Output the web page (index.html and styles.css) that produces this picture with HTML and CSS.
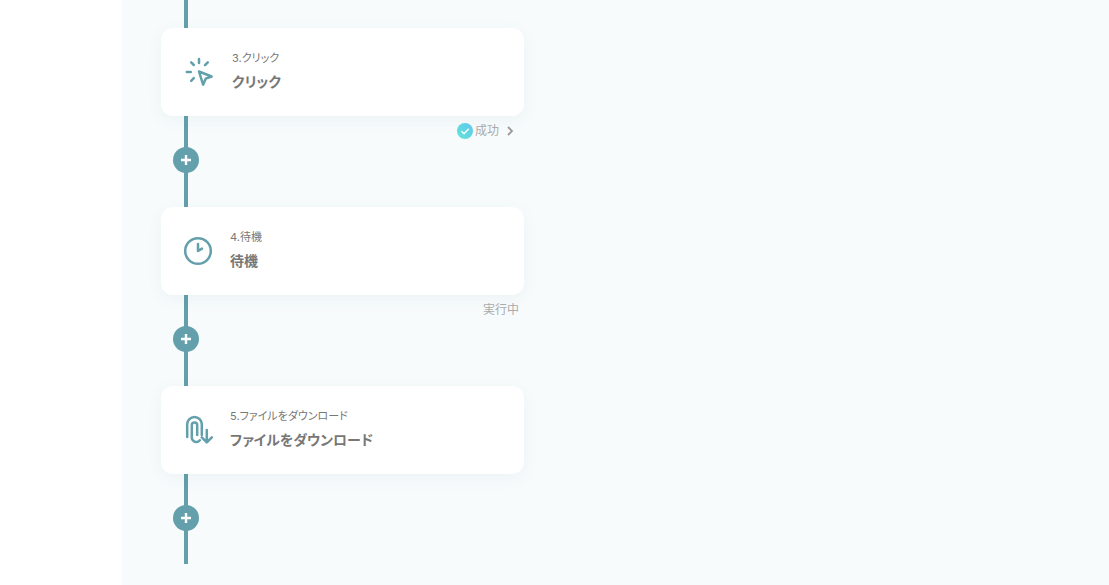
FILE: index.html
```
<!DOCTYPE html>
<html lang="ja">
<head>
<meta charset="utf-8">
<title>ワークフロー</title>
<link rel="stylesheet" href="styles.css">
</head>
<body>
<main class="canvas">
  <ol class="flow">
    <li class="step">
      <article class="card">
        <svg class="icon icon-click" viewBox="0 0 30 30" aria-hidden="true"><path d="M14 2v4M6.2 5.4l2.6 2.6M22.8 5.4L20 8.2M1.8 15h4M6.2 23.8l2.6-2.6M14 14.5l12.6 5-5.9 2.2-2.6 6z"/></svg>
        <div class="text"><p class="label">3.クリック</p><h2 class="title">クリック</h2></div>
      </article>
      <div class="connector">
        <button class="add" type="button" aria-label="ステップを追加"><svg class="plus" viewBox="0 0 12 12" aria-hidden="true"><path d="M6 1v10M1 6h10"/></svg></button>
        <button class="status" type="button">
          <svg class="check" viewBox="0 0 16 16" aria-hidden="true"><defs><linearGradient id="done" x1="0" y1="1" x2="1" y2="0"><stop offset="0" stop-color="#62e6d5"/><stop offset="1" stop-color="#60c6f0"/></linearGradient></defs><circle cx="8" cy="8" r="8" fill="url(#done)"/><path d="M4.5 8.2l2.5 2.5 4.8-5"/></svg>
          <span>成功</span>
          <svg class="chevron" viewBox="0 0 10 12" aria-hidden="true"><path d="M3 2l4 4-4 4"/></svg>
        </button>
      </div>
    </li>
    <li class="step">
      <article class="card">
        <svg class="icon" viewBox="0 0 30 30" aria-hidden="true"><circle cx="15" cy="15" r="12.8"/><path d="M15 8v7l4-2.4"/></svg>
        <div class="text"><p class="label">4.待機</p><h2 class="title">待機</h2></div>
      </article>
      <div class="connector">
        <button class="add" type="button" aria-label="ステップを追加"><svg class="plus" viewBox="0 0 12 12" aria-hidden="true"><path d="M6 1v10M1 6h10"/></svg></button>
        <p class="status">実行中</p>
      </div>
    </li>
    <li class="step">
      <article class="card">
        <svg class="icon" viewBox="0 0 30 30" aria-hidden="true"><path d="M4.2 22V9.2a7.3 7.3 0 0 1 14.6 0V20M14.2 20V10.2a2.7 2.7 0 0 0-5.4 0V22a4.5 4.5 0 0 0 8 3.2M23.8 15v12M18.8 22.4l5 5 5-5"/></svg>
        <div class="text"><p class="label">5.ファイルをダウンロード</p><h2 class="title">ファイルをダウンロード</h2></div>
      </article>
      <div class="connector">
        <button class="add" type="button" aria-label="ステップを追加"><svg class="plus" viewBox="0 0 12 12" aria-hidden="true"><path d="M6 1v10M1 6h10"/></svg></button>
      </div>
    </li>
  </ol>
</main>
</body>
</html>
```
FILE: styles.css
```
* { box-sizing: border-box; }
body {
  margin: 0;
  background: #fff;
  font-family: Inter, "Noto Sans CJK JP", sans-serif;
  font-feature-settings: "palt";
  color: #777;
}
p, h2, ol { margin: 0; padding: 0; }
.canvas {
  min-height: 100vh;
  margin-left: 11%;
  padding: 0 39px 21px;
  background: #f7fbfc;
}
.flow {
  max-width: 363px;
  padding-top: 28px;
  list-style: none;
  background: linear-gradient(#649fac, #649fac) 23px 0 / 4px 100% no-repeat;
}
.card {
  display: flex;
  align-items: center;
  gap: 17px;
  min-height: 88px;
  padding: 16px 22px;
  border-radius: 12px;
  background: #fff;
  box-shadow: 0 4px 16px rgba(60, 110, 120, 0.06);
}
.icon {
  flex: none;
  width: 30px;
  height: 30px;
  fill: none;
  stroke: #649fac;
  stroke-width: 2.5;
  stroke-linecap: round;
  stroke-linejoin: round;
}
.icon-click { margin-left: 2px; }
.text { padding-bottom: 1px; }
.label { font-size: 11px; line-height: 20px; }
.title { font-size: 14px; line-height: 28px; font-weight: 700; }
.connector {
  display: flex;
  justify-content: space-between;
  align-items: flex-start;
  height: 91px;
  padding: 7px 5px 0 12px;
}
.step:last-child .connector { height: 90px; }
button {
  border: 0;
  padding: 0;
  font: inherit;
  font-feature-settings: inherit;
  cursor: pointer;
}
.add {
  display: grid;
  place-items: center;
  width: 26px;
  height: 26px;
  margin-top: 24px;
  border-radius: 50%;
  background: #649fac;
}
.plus {
  width: 12px;
  height: 12px;
  fill: none;
  stroke: #fff;
  stroke-width: 2.4;
}
.status {
  display: flex;
  align-items: center;
  gap: 2px;
  background: none;
  font-size: 12px;
  line-height: 16px;
  color: #aaa;
}
.check { width: 16px; height: 16px; }
.check path {
  fill: none;
  stroke: #fff;
  stroke-width: 1.3;
}
.chevron {
  width: 10px;
  height: 12px;
  margin: 0 4px;
  fill: none;
  stroke: #999;
  stroke-width: 1.8;
}
```
